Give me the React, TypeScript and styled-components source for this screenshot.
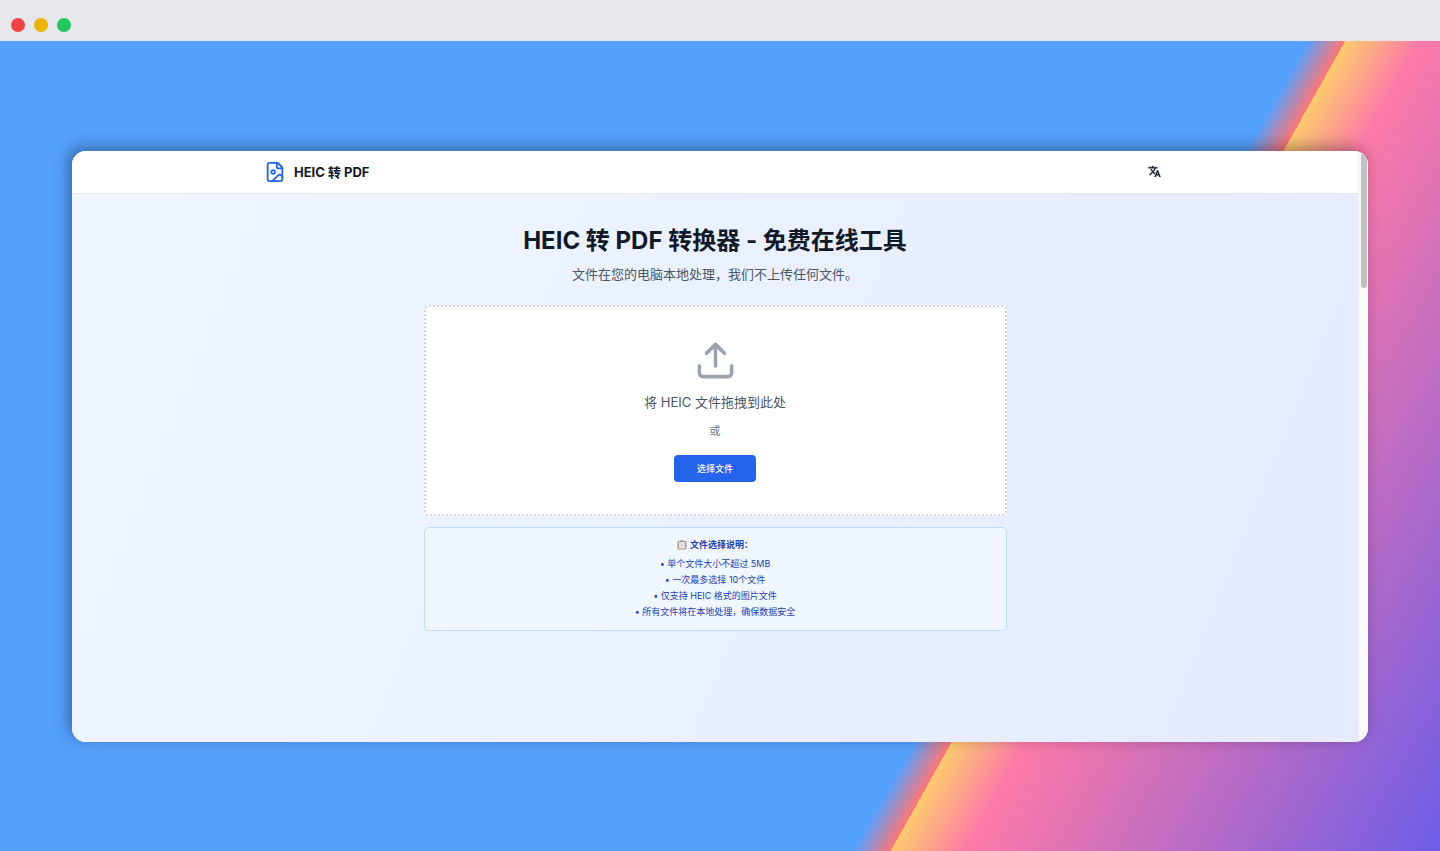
import React from "react";
import styled, { createGlobalStyle } from "styled-components";
import { FileImage, Upload } from "lucide-react";

const GlobalStyle = createGlobalStyle`
  * { box-sizing: border-box; }
  body {
    margin: 0;
    font-family: Inter, "Noto Sans CJK SC", sans-serif;
    color: #111827;
  }
  h1, h2, p, ul { margin: 0; padding: 0; }
`;

const Page = styled.div`
  display: flex;
  flex-direction: column;
  min-height: 100vh;
`;

const TitleBar = styled.div`
  display: flex;
  gap: 9px;
  padding: 18px 11px 9px;
  background: #e5e7eb;
`;

const Light = styled.span<{ $color: string }>`
  width: 14px;
  height: 14px;
  border-radius: 50%;
  background: ${(p) => p.$color};
`;

const Desktop = styled.div`
  flex: 1;
  display: flex;
  align-items: center;
  justify-content: center;
  background: linear-gradient(
    119.3deg,
    #55a1ff 69%,
    #ff7675 71%,
    #fdcb6e 71%,
    #fd79a8 75%,
    #6c5ce7 100%
  );
`;

const Browser = styled.div`
  display: flex;
  width: 90%;
  aspect-ratio: 1296 / 591;
  border-radius: 14px;
  overflow: hidden;
  background: #fafafa;
  box-shadow: -4px -4px 16px rgba(0, 0, 0, 0.35);
`;

const Site = styled.div`
  flex: 1;
  display: flex;
  flex-direction: column;
`;

const Scrollbar = styled.div`
  width: 10px;
  padding: 2px;
  border-left: 1px solid #ececec;
  background: #fafafa;
`;

const Thumb = styled.div`
  width: 6px;
  height: 23%;
  border-radius: 3px;
  background: #c1c1c1;
`;

const Header = styled.header`
  background: #ffffff;
  border-bottom: 1px solid #e5e7eb;
`;

const HeaderInner = styled.div`
  display: flex;
  align-items: center;
  justify-content: space-between;
  max-width: 902px;
  height: 42px;
  margin: 0 auto;
`;

const Brand = styled.a`
  display: flex;
  align-items: center;
  gap: 8px;
  color: #111827;
  font-size: 13px;
  line-height: 20px;
  font-weight: 700;
  text-decoration: none;
`;

const IconButton = styled.button`
  display: flex;
  padding: 5px;
  border: 0;
  background: none;
  color: #111827;
`;

const Main = styled.main`
  flex: 1;
  display: flex;
  flex-direction: column;
  align-items: center;
  padding: 33px 22px;
  background: linear-gradient(112deg, #eff6ff, #e5eaff);
  text-align: center;
`;

const Title = styled.h1`
  font-size: 24px;
  line-height: 28px;
  font-weight: 700;
`;

const Subtitle = styled.p`
  margin-top: 9px;
  color: #4b5563;
  font-size: 13px;
  line-height: 20px;
`;

const DropZone = styled.section`
  display: flex;
  flex-direction: column;
  align-items: center;
  width: 100%;
  max-width: 583px;
  margin-top: 21px;
  padding: 32px;
  border: 2px dotted #d1d5db;
  border-radius: 5px;
  background: #ffffff;
`;

const DropText = styled.p`
  margin-top: 10px;
  color: #4b5563;
  font-size: 13px;
  line-height: 20px;
`;

const OrText = styled.p`
  margin-top: 11px;
  color: #6b7280;
  font-size: 11px;
  line-height: 16px;
`;

const PickButton = styled.button`
  margin-top: 16px;
  padding: 6px 23px;
  border: 0;
  border-radius: 4px;
  background: #2563eb;
  color: #ffffff;
  font: inherit;
  font-size: 9px;
  line-height: 15px;
  font-weight: 500;
`;

const Notes = styled.section`
  width: 100%;
  max-width: 583px;
  margin-top: 11px;
  padding: 9px 10px 10px;
  border: 1px solid #bfdbfe;
  border-radius: 5px;
  background: #eff6ff;
  color: #1e40af;
`;

const NotesTitle = styled.h2`
  display: flex;
  align-items: center;
  justify-content: center;
  gap: 3px;
  margin-bottom: 3px;
  font-size: 9px;
  line-height: 16px;
  font-weight: 600;
`;

const NotesList = styled.ul`
  list-style: none;
  font-size: 9px;
  line-height: 16px;
`;

const NOTES = [
  "单个文件大小不超过 5MB",
  "一次最多选择 10个文件",
  "仅支持 HEIC 格式的图片文件",
  "所有文件将在本地处理，确保数据安全",
];

function Clipboard() {
  return (
    <svg width="10" height="10" viewBox="0 0 20 20" aria-hidden="true">
      <rect x="1" y="2" width="18" height="17" rx="2" fill="#b99a7a" />
      <rect x="4" y="4" width="12" height="13" fill="#e3e5ea" />
      <path d="M5 8h10M5 11h10M5 14h10" stroke="#c4c8d0" strokeWidth="1" />
      <rect x="6" y="1" width="8" height="3" rx="1" fill="#8d8f96" />
    </svg>
  );
}

function TranslateIcon() {
  return (
    <svg
      width="13"
      height="13"
      viewBox="0 0 24 24"
      fill="currentColor"
      stroke="currentColor"
      strokeWidth="0.8"
      aria-hidden="true"
    >
      <path d="M12.87 15.07l-2.54-2.51.03-.03A17.52 17.52 0 0 0 14.07 6H17V4h-7V2H8v2H1v1.99h11.17C11.5 7.92 10.44 9.75 9 11.35 8.07 10.32 7.3 9.19 6.69 8h-2c.73 1.63 1.73 3.17 2.98 4.56l-5.09 5.02L4 19l5-5 3.11 3.11.76-2.04z" />
      <path d="M18.5 10h-2L12 22h2l1.12-3h4.75L21 22h2l-4.5-12zm-2.62 7l1.62-4.33L19.12 17h-3.24z" />
    </svg>
  );
}

export default function App() {
  return (
    <Page>
      <GlobalStyle />
      <TitleBar>
        <Light $color="#ef4444" />
        <Light $color="#eab308" />
        <Light $color="#22c55e" />
      </TitleBar>
      <Desktop>
        <Browser>
          <Site>
            <Header>
              <HeaderInner>
                <Brand href="#">
                  <FileImage size={22} color="#2563eb" />
                  HEIC 转 PDF
                </Brand>
                <IconButton type="button" aria-label="语言">
                  <TranslateIcon />
                </IconButton>
              </HeaderInner>
            </Header>
            <Main>
              <Title>HEIC 转 PDF 转换器 - 免费在线工具</Title>
              <Subtitle>文件在您的电脑本地处理，我们不上传任何文件。</Subtitle>
              <DropZone>
                <Upload size={43} color="#9ca3af" />
                <DropText>将 HEIC 文件拖拽到此处</DropText>
                <OrText>或</OrText>
                <PickButton type="button">选择文件</PickButton>
              </DropZone>
              <Notes>
                <NotesTitle>
                  <Clipboard />
                  文件选择说明：
                </NotesTitle>
                <NotesList>
                  {NOTES.map((note) => (
                    <li key={note}>• {note}</li>
                  ))}
                </NotesList>
              </Notes>
            </Main>
          </Site>
          <Scrollbar>
            <Thumb />
          </Scrollbar>
        </Browser>
      </Desktop>
    </Page>
  );
}
